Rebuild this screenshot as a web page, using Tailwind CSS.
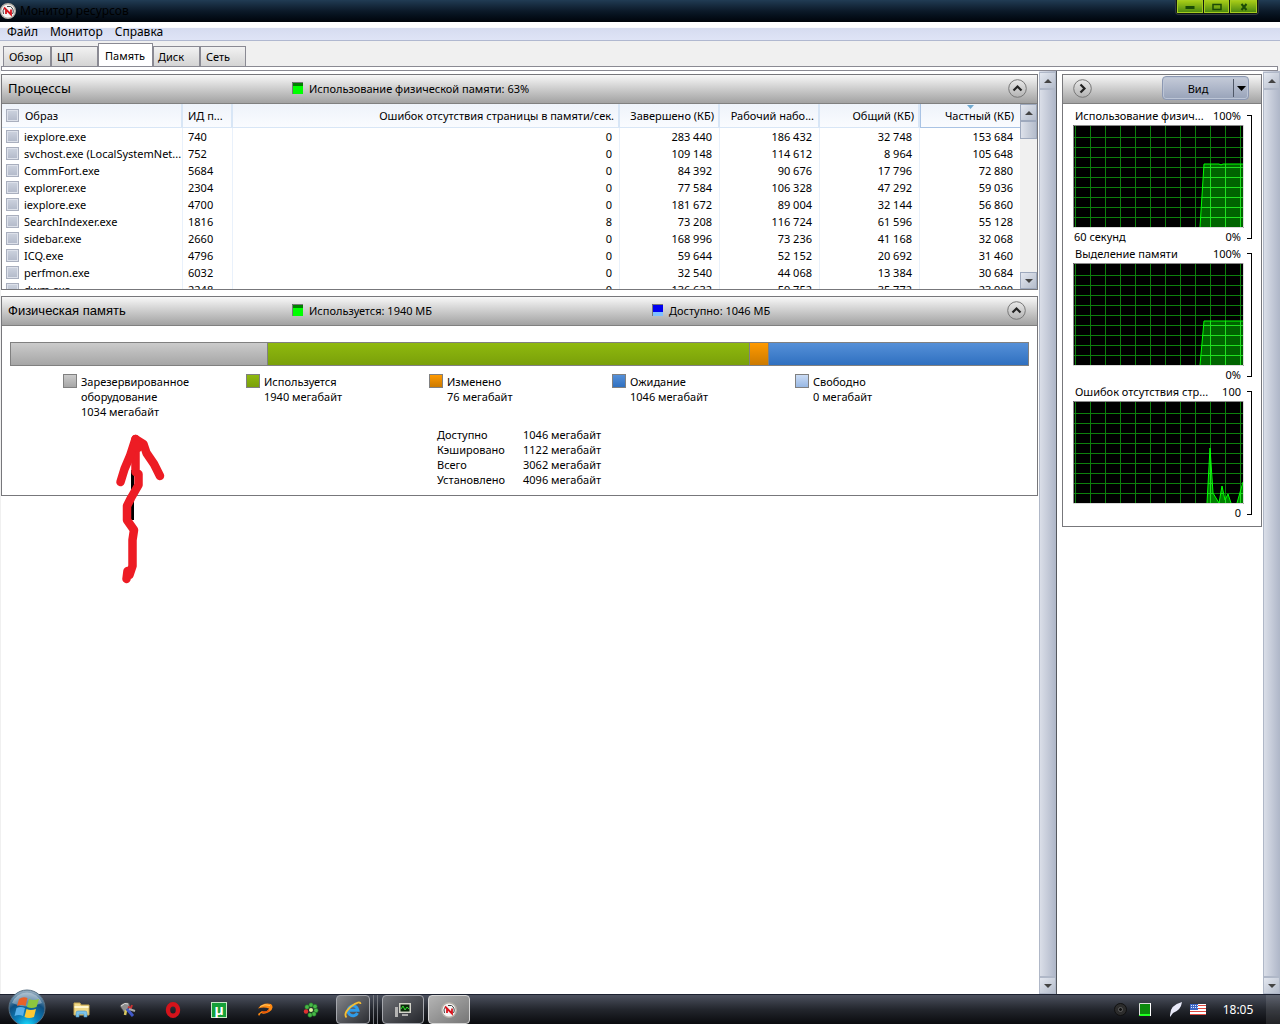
<!DOCTYPE html>
<html lang="ru">
<head>
<meta charset="utf-8">
<title>Монитор ресурсов</title>
<script src="https://cdn.jsdelivr.net/npm/@tailwindcss/browser@4"></script>
</head>
<body class="flex min-h-screen flex-col bg-white font-['Noto_Sans',sans-serif] text-[11px] leading-[15px] text-black">

<!-- Shared glyphs -->
<svg class="hidden" aria-hidden="true">
  <defs>
    <linearGradient id="face" x1="0" y1="0" x2="0" y2="1"><stop offset="0" stop-color="#fff"/><stop offset="1" stop-color="#d4d4d4"/></linearGradient>
    <symbol id="gauge" viewBox="0 0 16 16"><circle cx="8" cy="8" r="7.300" fill="#f4f4f4" stroke="#b4b0a8" stroke-width="1.400"/><path d="M3.500 11a5.500 5.500 0 0 1 1-6M12.500 11a5.500 5.500 0 0 0-2-7.500L7 3.500" fill="none" stroke="#444" stroke-width="1"/><path d="M4 4.500l7 7V6.500M6 11V7" fill="none" stroke="#d8141c" stroke-width="1.800"/></symbol>
    <symbol id="up" viewBox="0 0 19 19"><circle cx="9.500" cy="9.500" r="8.800" fill="url(#face)" stroke="#777"/><path d="M5.500 11.500l4-4 4 4" fill="none" stroke="#222" stroke-width="2.200"/></symbol>
    <symbol id="right" viewBox="0 0 19 19"><circle cx="9.500" cy="9.500" r="8.800" fill="url(#face)" stroke="#777"/><path d="M7.500 5.500l4 4-4 4" fill="none" stroke="#222" stroke-width="2.200"/></symbol>
    <symbol id="sbup" viewBox="0 0 8 4"><path d="M0 4L4 0l4 4z" fill="#444"/></symbol>
    <symbol id="sbdown" viewBox="0 0 8 4"><path d="M0 0l4 4 4-4z" fill="#444"/></symbol>
    <pattern id="dots" width="2" height="2" patternUnits="userSpaceOnUse"><rect width="1" height="1" fill="#002800"/></pattern>
  </defs>
</svg>

<header class="flex h-[22px] justify-between bg-linear-to-b from-[#213c54] via-[#0c1a29] to-[#01050b]">
  <div class="flex items-center gap-1">
    <svg class="size-4"><use href="#gauge"/></svg>
    <h1 class="text-xs">Монитор ресурсов</h1>
  </div>
  <div class="mr-[21px] flex h-[15px] gap-px rounded-b border border-t-0 border-[#333a40] bg-[#101a10] px-px pb-px">
    <button aria-label="Свернуть" class="flex w-[26px] items-center justify-center border border-[#a6cc20] bg-linear-to-b from-[#a5cb16] to-[#4c8a10]"><svg class="h-2 w-3" viewBox="0 0 12 8"><path d="M1.500 3h9v3h-9z" fill="#1b4a07"/></svg></button>
    <button aria-label="Развернуть" class="flex w-[25px] items-center justify-center border border-[#a6cc20] bg-linear-to-b from-[#a5cb16] to-[#4c8a10]"><svg class="h-2 w-3" viewBox="0 0 12 8"><path d="M2 1.500h8v5H2z" fill="none" stroke="#1b4a07" stroke-width="1.500"/></svg></button>
    <button aria-label="Закрыть" class="flex w-[27px] items-center justify-center border border-[#a6cc20] bg-linear-to-b from-[#a5cb16] to-[#4c8a10]"><svg class="h-2 w-3" viewBox="0 0 12 8"><path d="M3.500 1l5 6M8.500 1l-5 6" stroke="#1b4a07" stroke-width="2"/></svg></button>
  </div>
</header>

<nav class="flex h-[19px] items-center gap-3 border-b border-[#b0b8d0] bg-linear-to-b from-white from-30% via-[#d6dcf0] via-35% to-[#dfe4f6] px-[7px] pt-0.5 text-xs">
  <button>Файл</button><button>Монитор</button><button>Справка</button>
</nav>

<div class="flex h-[25px] items-end bg-[#f0f0f0] pl-[3px]" role="tablist">
  <button role="tab" class="h-5 w-12 border border-b-0 border-[#8a8a93] bg-linear-to-b from-[#f2f2f2] to-[#d4d4d4] px-[5px] text-left">Обзор</button>
  <button role="tab" class="h-5 w-[47px] border border-b-0 border-[#8a8a93] bg-linear-to-b from-[#f2f2f2] to-[#d4d4d4] px-[5px] text-left">ЦП</button>
  <button role="tab" aria-selected="true" class="h-[23px] w-[55px] border border-b-0 border-[#8a8a93] bg-white px-1.5 text-left">Память</button>
  <button role="tab" class="h-5 w-[47px] border border-b-0 border-[#8a8a93] bg-linear-to-b from-[#f2f2f2] to-[#d4d4d4] px-1 text-left">Диск</button>
  <button role="tab" class="h-5 w-[46px] border border-b-0 border-[#8a8a93] bg-linear-to-b from-[#f2f2f2] to-[#d4d4d4] px-[5px] text-left">Сеть</button>
</div>
<div class="bg-[#f0f0f0] px-px"><div class="mr-px h-[5px] border border-[#8a8a93] bg-white"></div></div>

<div class="flex flex-1 border-l border-[#f0f0f0]">
  <main class="flex min-w-0 flex-1 flex-col gap-1.5 pt-[3px] pr-px">
    <section class="border border-[#77777b]">
      <div class="flex h-[29px] items-center border-b border-[#808080] bg-linear-to-b from-[#f8f8f8] to-[#a2a2a2] pr-2.5 pb-0.5 pl-1.5">
        <h2 class="w-[284px] text-[13px]">Процессы</h2>
        <p class="flex flex-1 items-center gap-1.5"><svg class="h-3 w-[11px]"><rect width="11" height="12" fill="#00ff00"/><rect width="11" height="4" fill="#008000"/><rect width="11" height="4" fill="url(#dots)"/><path d="M.5 12V.5H11" fill="none" stroke="#777"/></svg>Использование физической памяти: 63%</p>
        <button aria-label="Свернуть"><svg class="block size-[19px]"><use href="#up"/></svg></button>
      </div>
      <div class="flex h-[185px] overflow-hidden">
        <div class="min-w-0 flex-1 overflow-hidden">
          <table class="w-full table-fixed border-separate border-spacing-0">
            <colgroup><col class="w-[181px]"><col class="w-[50px]"><col><col class="w-[100px]"><col class="w-[100px]"><col class="w-[100px]"><col class="w-[100px]"></colgroup>
            <thead>
              <tr class="h-6 bg-linear-to-b from-[#eef3fa] to-[#fafcff] text-right">
                <th class="border-r-2 border-b border-[#d8e6f6] px-1 text-left font-normal"><label class="flex items-center gap-1.5"><input type="checkbox" class="size-[13px] shrink-0 appearance-none border border-[#a9afbe] bg-linear-to-b from-[#cdd3df] to-[#b2b9c9] shadow-[inset_0_0_0_1px_#dde1ea]">Образ</label></th>
                <th class="border-r-2 border-b border-[#d8e6f6] px-[5px] text-left font-normal whitespace-nowrap">ИД п...</th>
                <th class="border-r-2 border-b border-[#d8e6f6] px-1 font-normal">Ошибок отсутствия страницы в памяти/сек.</th>
                <th class="border-r-2 border-b border-[#d8e6f6] px-1 font-normal whitespace-nowrap">Завершено (КБ)</th>
                <th class="border-r-2 border-b border-[#d8e6f6] px-1 font-normal whitespace-nowrap">Рабочий набо...</th>
                <th class="border-r-2 border-b border-[#d8e6f6] px-1 font-normal whitespace-nowrap">Общий (КБ)</th>
                <th class="relative border-b border-l border-[#a9c3e4] px-1.5 font-normal whitespace-nowrap"><svg class="absolute top-px left-[46px] h-1 w-[7px]" viewBox="0 0 7 4"><path d="M0 0h7L3.500 4z" fill="#6fa9cf"/></svg>Частный (КБ)</th>
              </tr>
            </thead>
            <tbody id="processes"></tbody>
          </table>
        </div>
        <div class="flex w-[17px] flex-col bg-[#f0f0f0]">
          <button aria-label="Вверх" class="flex h-[17px] items-center justify-center border border-[#9ea9bd] bg-linear-to-br from-[#e4e8f0] to-[#b4bccb]"><svg class="h-1 w-2"><use href="#sbup"/></svg></button>
          <div class="h-[18px] border border-[#9ea9bd] bg-linear-to-r from-[#dde1ea] to-[#b4bccb]"></div>
          <div class="flex-1"></div>
          <button aria-label="Вниз" class="flex h-[17px] items-center justify-center border border-[#9ea9bd] bg-linear-to-br from-[#e4e8f0] to-[#b4bccb]"><svg class="h-1 w-2"><use href="#sbdown"/></svg></button>
        </div>
      </div>
    </section>

    <section class="relative border border-[#77777b]">
      <div class="flex h-[29px] items-center border-b border-[#808080] bg-linear-to-b from-[#f8f8f8] to-[#a2a2a2] pr-[11px] pb-0.5 pl-1.5">
        <h2 class="w-[284px] font-['Liberation_Sans',sans-serif] text-[13px]">Физическая память</h2>
        <p class="flex w-[360px] items-center gap-1.5"><svg class="h-3 w-[11px]"><rect width="11" height="12" fill="#00ff00"/><rect width="11" height="4" fill="#008000"/><rect width="11" height="4" fill="url(#dots)"/><path d="M.5 12V.5H11" fill="none" stroke="#777"/></svg>Используется: 1940 МБ</p>
        <p class="flex flex-1 items-center gap-1.5"><svg class="h-3 w-[11px]"><rect width="11" height="12" fill="#80c0ff"/><rect width="11" height="8" fill="#0000f0"/><path d="M.5 12V.5H11" fill="none" stroke="#777"/></svg>Доступно: 1046 МБ</p>
        <button aria-label="Свернуть"><svg class="block size-[19px]"><use href="#up"/></svg></button>
      </div>
      <div class="px-2 pt-4 pb-2">
        <div class="flex h-6 divide-x divide-[#808080] border border-[#808080]">
          <div class="bg-linear-to-b from-[#cbcbcb] to-[#a6a6a6]" style="flex:257 0 0"></div>
          <div class="bg-linear-to-b from-[#8fb90e] to-[#7aa00a]" style="flex:483 0 0"></div>
          <div class="bg-linear-to-b from-[#ff9a00] to-[#cc7a00]" style="flex:18 0 0"></div>
          <div class="bg-linear-to-b from-[#5590d8] to-[#2f70c0]" style="flex:260 0 0"></div>
        </div>
        <ul class="mt-2 flex h-[53px] pl-[53px]">
          <li class="flex w-[183px] items-start gap-1"><span class="size-3.5 shrink-0 border border-[#808080] bg-linear-to-b from-[#cbcbcb] to-[#a6a6a6]"></span><span>Зарезервированное<br>оборудование<br>1034 мегабайт</span></li>
          <li class="flex w-[183px] items-start gap-1"><span class="size-3.5 shrink-0 border border-[#808080] bg-linear-to-b from-[#8fb90e] to-[#7aa00a]"></span><span>Используется<br>1940 мегабайт</span></li>
          <li class="flex w-[183px] items-start gap-1"><span class="size-3.5 shrink-0 border border-[#808080] bg-linear-to-b from-[#ff9a00] to-[#cc7a00]"></span><span>Изменено<br>76 мегабайт</span></li>
          <li class="flex w-[183px] items-start gap-1"><span class="size-3.5 shrink-0 border border-[#808080] bg-linear-to-b from-[#5590d8] to-[#2f70c0]"></span><span>Ожидание<br>1046 мегабайт</span></li>
          <li class="flex w-[183px] items-start gap-1"><span class="size-3.5 shrink-0 border border-[#808080] bg-linear-to-b from-[#cbdcf5] to-[#98b8e4]"></span><span>Свободно<br>0 мегабайт</span></li>
        </ul>
        <dl class="ml-[427px] grid grid-cols-[86px_1fr]">
          <dt>Доступно</dt><dd>1046 мегабайт</dd>
          <dt>Кэшировано</dt><dd>1122 мегабайт</dd>
          <dt>Всего</dt><dd>3062 мегабайт</dd>
          <dt>Установлено</dt><dd>4096 мегабайт</dd>
        </dl>
      </div>
      <!-- Hand-drawn arrow pointing at the reserved memory -->
      <svg class="absolute top-[133px] left-[108px] h-[160px] w-[60px]" viewBox="110 430 60 160" fill="none" stroke="#ed1c24" stroke-width="8.500" stroke-linecap="round" stroke-linejoin="round">
        <path d="M132.500 470v50" stroke="#000" stroke-width="3" stroke-linecap="butt"/>
        <path d="M126.500 579l1-8 2 4 3-9v-26l1.500-10-7-10v-14l4-8 7.500-13v-11l-3-2V439"/>
        <path d="M120.500 482l4-13 5.500-13 5.500-17 8 5 3 9 7.500 11 6 12"/>
        <path d="M135 445l3 2" stroke-width="10"/>
      </svg>
    </section>
  </main>

  <div class="flex w-[18px] flex-col border-r border-[#55585e] bg-linear-to-r from-[#dde1ea] to-[#aeb6c8]">
    <button aria-label="Вверх" class="mt-px flex h-[17px] items-center justify-center border border-[#b0b8c8] bg-linear-to-br from-[#e4e8f0] to-[#b4bccb]"><svg class="h-1 w-2"><use href="#sbup"/></svg></button>
    <div class="flex-1 border border-[#b0b8c8]"></div>
    <button aria-label="Вниз" class="flex h-[17px] items-center justify-center border border-[#b0b8c8] bg-linear-to-br from-[#e4e8f0] to-[#b4bccb]"><svg class="h-1 w-2"><use href="#sbdown"/></svg></button>
  </div>

  <aside class="w-[206px] pt-[3px] pr-px pl-[5px]">
    <div class="border border-[#77777b]">
      <div class="flex h-[29px] items-center justify-between border-b border-[#808080] bg-linear-to-b from-[#f8f8f8] to-[#a2a2a2] pr-3 pb-0.5 pl-2.5">
        <button aria-label="Скрыть графики"><svg class="block size-[19px]"><use href="#right"/></svg></button>
        <button class="flex h-6 w-[87px] items-center rounded-sm border border-[#8c98b2] bg-linear-to-b from-[#c5cbd9] to-[#98a3b9] shadow-[inset_0_0_0_1px_#bcc5d6]"><span class="w-[70px]">Вид</span><span class="flex h-[18px] flex-1 items-center justify-center border-l border-[#505868]"><svg class="h-[5px] w-[9px]" viewBox="0 0 9 5"><path d="M0 0h9L4.500 5z"/></svg></span></button>
      </div>
      <div id="graphs" class="pt-1 pb-1"></div>
    </div>
  </aside>

  <div class="flex w-[17px] flex-col bg-linear-to-r from-[#dde1ea] to-[#aeb6c8]">
    <button aria-label="Вверх" class="mt-px flex h-[17px] items-center justify-center border border-[#b0b8c8] bg-linear-to-br from-[#e4e8f0] to-[#b4bccb]"><svg class="h-1 w-2"><use href="#sbup"/></svg></button>
    <div class="flex-1 border border-[#b0b8c8]"></div>
    <button aria-label="Вниз" class="flex h-[17px] items-center justify-center border border-[#b0b8c8] bg-linear-to-br from-[#e4e8f0] to-[#b4bccb]"><svg class="h-1 w-2"><use href="#sbdown"/></svg></button>
  </div>
</div>

<footer class="relative flex h-[30px] items-stretch border-t border-[#1c2130] bg-linear-to-b from-[#4a4f5c] from-3% via-[#23262d] via-50% to-[#0a0b0e] pl-[58px]">
  <button aria-label="Пуск" class="absolute -top-1.5 left-2 h-9 w-[38px]">
    <svg class="block size-full" viewBox="0 0 38 36">
      <defs><radialGradient id="orb" cx=".5" cy="1" r=".95"><stop offset="0" stop-color="#19e0ff"/><stop offset=".35" stop-color="#0a80bd"/><stop offset=".7" stop-color="#0f4f80"/><stop offset="1" stop-color="#8fa9bd"/></radialGradient></defs>
      <circle cx="19" cy="19" r="18" fill="url(#orb)" stroke="#5a7285"/>
      <path d="M4 14a16 16 0 0 1 30 0q-15 7-30 0z" fill="#fff" opacity=".35"/>
      <path d="M11 10q4-3 8.500-1l-2 8q-4-2-8.500 0z" fill="#e8622a"/><path d="M21 10q4 2 10 0l-2.500 8q-5 2-9.500 0z" fill="#8cc63e"/><path d="M8.500 19q4-2 8.500 0l-2 8q-4-2-8.500 0z" fill="#58b0ea"/><path d="M18.500 20q4 2 9.500 0l-2 8q-5 2-9.500 0z" fill="#fcc935"/>
    </svg>
  </button>
  <button aria-label="Проводник" class="flex w-[46px] items-center justify-center"><svg class="size-[17px]" viewBox="0 0 17 17"><path d="M1 2h6l1 2h8v10H1z" fill="#efd988" stroke="#c8a850"/><path d="M1.500 6h14" stroke="#fff6cc" stroke-width="2"/><path d="M3 16v-4q0-2 2-2h7q2 0 2 2v4h-3v-3H6v3z" fill="#7cc4ea" stroke="#4a90c0" stroke-width=".6"/></svg></button>
  <button aria-label="Инструменты" class="flex w-[46px] items-center justify-center"><svg class="size-[17px]" viewBox="0 0 17 17"><path d="M1 5q3-4 9-3l1 4-6 5z" fill="#8f8f8f" stroke="#444" stroke-width=".6"/><path d="M2 5q4-4 7-2" stroke="#ddd" fill="none"/><path d="M7 9l-1 5" stroke="#d8c860" stroke-width="2.500"/><path d="M8 8l6 7" stroke="#4058c8" stroke-width="3"/><path d="M9 6l3 1 1-3" stroke="#c83030" stroke-width="2" fill="none"/><path d="M10 8l6 2" stroke="#aaa" stroke-width="2"/></svg></button>
  <button aria-label="Opera" class="flex w-[46px] items-center justify-center"><svg class="size-4" viewBox="0 0 16 16"><ellipse cx="8" cy="8" rx="5" ry="5.800" fill="none" stroke="#d4131b" stroke-width="4.400"/></svg></button>
  <button aria-label="Торрент" class="flex w-[46px] items-center justify-center"><span class="flex size-4 items-center justify-center border border-[#c6e8c6] bg-[#16a038] text-sm leading-none font-bold text-white">µ</span></button>
  <button aria-label="Проигрыватель" class="flex w-[46px] items-center justify-center"><svg class="size-4" viewBox="0 0 16 16"><path d="M1 6.500Q6 0 14 2q4 4-2 8-5 3-8 1l-2 3-1-2 4-3q5 2 7-2.500-5-2-11 0z" fill="#ff8a12"/><path d="M3 4.500q5-3 10-1" stroke="#ffc860" fill="none"/><path d="M5 10q5 1 7-2" stroke="#e85408" fill="none" stroke-width="1.500"/></svg></button>
  <button aria-label="ICQ" class="flex w-[46px] items-center justify-center"><svg class="size-4" viewBox="0 0 16 16"><g fill="#48b848" stroke="#1d6a20" stroke-width=".5"><circle cx="8" cy="3" r="2.200"/><circle cx="12" cy="4.500" r="2.200"/><circle cx="13" cy="8.500" r="2.200"/><circle cx="11" cy="12" r="2.200"/><circle cx="7" cy="13" r="2.200"/><circle cx="4" cy="5" r="2.200"/></g><circle cx="3" cy="9.500" r="2.200" fill="#e03030"/><circle cx="8" cy="8" r="2" fill="#dff5a0"/></svg></button>
  <div class="ml-0.5 flex items-stretch">
    <button aria-label="Internet Explorer" class="flex w-[34px] items-center justify-center rounded-sm border border-[#a5a7ad] bg-linear-to-br from-[#85878c] to-[#2c2e33]"><svg class="size-[18px]" viewBox="0 0 18 18"><path d="M13.500 12a5 5 0 1 1 .500-2.700H5" fill="none" stroke="#2f9cea" stroke-width="3"/><path d="M2.500 16.500Q-1 12.500 7 5.500q9-6.500 9.500-2.500" fill="none" stroke="#f5bd32" stroke-width="1.800"/></svg></button>
    <span class="w-1 border-r border-[#777a80]"></span><span class="w-1 border-r border-[#777a80]"></span>
    <button aria-label="Диспетчер" class="ml-1 flex w-[42px] items-center justify-center rounded-sm border border-[#a5a7ad] bg-linear-to-br from-[#74767c] to-[#25272c]"><svg class="size-4" viewBox="0 0 16 16"><path d="M4 1h12v10H4z" fill="#d2d2c8"/><path d="M5.500 2.500h9v7h-9z" fill="#0a2a0a"/><path d="M6 7l2-3 2 4 2-3 2 2" fill="none" stroke="#30e030"/><path d="M7 12h6v2H7z" fill="#aaa"/><path d="M0 5h3v10H0z" fill="#b4b4b4"/></svg></button>
    <button aria-label="Монитор ресурсов" class="ml-1 flex w-[42px] items-center justify-center rounded-sm border border-[#d5d5d5] bg-linear-to-br from-[#b5b5b5] to-[#767676]"><svg class="size-4"><use href="#gauge"/></svg></button>
  </div>
  <div class="ml-auto flex items-center text-[11px] text-white">
    <svg class="mr-3 size-[13px]" viewBox="0 0 13 13"><circle cx="6.500" cy="6.500" r="6" fill="#2c2c2c" stroke="#111"/><circle cx="6.500" cy="6.500" r="2" fill="#111" stroke="#777" stroke-width=".7"/></svg>
    <svg class="mr-[18px] h-[13px] w-3"><rect width="12" height="13" fill="#0c8a0c"/><rect width="12" height="11" fill="url(#dots)"/><path d="M0 12h12" stroke="#20ff20" stroke-width="2"/><path d="M.5 12V.5H12" stroke="#ddd" fill="none"/><path d="M11.500 0v13" stroke="#fff"/></svg>
    <svg class="mr-2 h-[15px] w-[13px]" viewBox="0 0 13 15"><path d="M1 13Q1 3 13 0 12 8 4 11L1 15z" fill="#e8e9f8"/></svg>
    <svg class="h-[11px] w-4" viewBox="0 0 16 11"><path fill="#fff" d="M0 0h16v11H0z"/><path d="M0 1.500h16M0 4.500h16M0 7.500h16M0 10.500h16" stroke="#e04a40"/><path fill="#3b66c4" d="M0 0h8v6H0z"/><path d="M1 1.500h7M1 3.500h7" stroke="#dfe8ff" stroke-dasharray="1 1"/></svg>
    <time class="mr-3 ml-4 w-8 text-center text-xs">18:05</time>
    <span class="h-full w-[14px] bg-white/10"></span>
  </div>
</footer>

<script>
const rows = [
  ['iexplore.exe','740','0','283 440','186 432','32 748','153 684'],
  ['svchost.exe (LocalSystemNet...','752','0','109 148','114 612','8 964','105 648'],
  ['CommFort.exe','5684','0','84 392','90 676','17 796','72 880'],
  ['explorer.exe','2304','0','77 584','106 328','47 292','59 036'],
  ['iexplore.exe','4700','0','181 672','89 004','32 144','56 860'],
  ['SearchIndexer.exe','1816','8','73 208','116 724','61 596','55 128'],
  ['sidebar.exe','2660','0','168 996','73 236','41 168','32 068'],
  ['ICQ.exe','4796','0','59 644','52 152','20 692','31 460'],
  ['perfmon.exe','6032','0','32 540','44 068','13 384','30 684'],
  ['dwm.exe','2248','0','136 632','59 752','35 772','23 980']
];
document.getElementById('processes').innerHTML = rows.map(r => `<tr class="h-[17px] text-right">
  <td class="border-r border-[#e9f1fb] py-px pr-0 pl-1 text-left"><label class="flex items-center gap-[5px] whitespace-nowrap"><input type="checkbox" class="size-[13px] shrink-0 appearance-none border border-[#a9afbe] bg-linear-to-b from-[#cdd3df] to-[#b2b9c9] shadow-[inset_0_0_0_1px_#dde1ea]">${r[0]}</label></td>
  <td class="border-r border-[#e9f1fb] px-[5px] py-px text-left">${r[1]}</td>` +
  r.slice(2).map((v, i) => `<td class="${i < 4 ? 'border-r border-[#e9f1fb] px-[7px] py-px' : 'px-[7px] py-px'}">${v}</td>`).join('') + '</tr>').join('');

const graphs = [
  { title: 'Использование физич...', max: '100%', from: '60 секунд', min: '0%', line: 'M127 102L131 39H146l2 1l2 -1H170', area: 'M127 102L131 39H170V102z', fill: '#006400' },
  { title: 'Выделение памяти', max: '100%', from: '', min: '0%', line: 'M127 102L131 58H170', area: 'M127 102L131 58H170V102z', fill: '#006400' },
  { title: 'Ошибок отсутствия стр...', max: '100', from: '', min: '0', line: 'M134 102L137 47L140 92L146 102L149 85L152 99L155 93L158 102M164 102L170 81', area: 'M134 102L137 47L140 92L146 102L149 85L152 99L155 93L158 102zM164 102L170 81V102z', fill: '#008000' }
];
document.getElementById('graphs').innerHTML = graphs.map((g, n) => {
  let grid = '';
  for (let x = 2; x < 170; x += 15) grid += `M${x}.5 1V102`;
  for (let y = 12; y < 102; y += 10) grid += `M1 ${y}.5H170`;
  return `<figure class="flex h-[138px] pl-2.5">
    <div class="w-[171px]">
      <figcaption class="flex h-[17px] justify-between pr-[3px] pl-0.5"><span>${g.title}</span><span>${g.max}</span></figcaption>
      <svg class="block h-[103px] w-[171px]" viewBox="0 0 171 103" aria-hidden="true">
        <rect width="171" height="103" fill="#000"/>
        <path d="${grid}" stroke="#0d800d" fill="none" shape-rendering="crispEdges"/>
        <path d="${g.area}" fill="${g.fill}"/>
        <clipPath id="clip${n}"><path d="${g.area}"/></clipPath>
        <path d="${grid}" stroke="#20e020" fill="none" clip-path="url(#clip${n})"/>
        <path d="${g.line}" stroke="#00ff00" fill="none"/>
        <path d="M.5 103V.5H171" stroke="#8a8a8a" fill="none"/><path d="M0 102.500H170.500V0" stroke="#dcdcdc" fill="none"/>
      </svg>
      <div class="flex justify-between pt-px pr-[3px] pl-px"><span>${g.from}</span><span>${g.min}</span></div>
    </div>
    <div class="mt-[7px] ml-[3px] h-[124px] w-[5px] border border-l-0 border-black"></div>
  </figure>`;
}).join('');
</script>
</body>
</html>
